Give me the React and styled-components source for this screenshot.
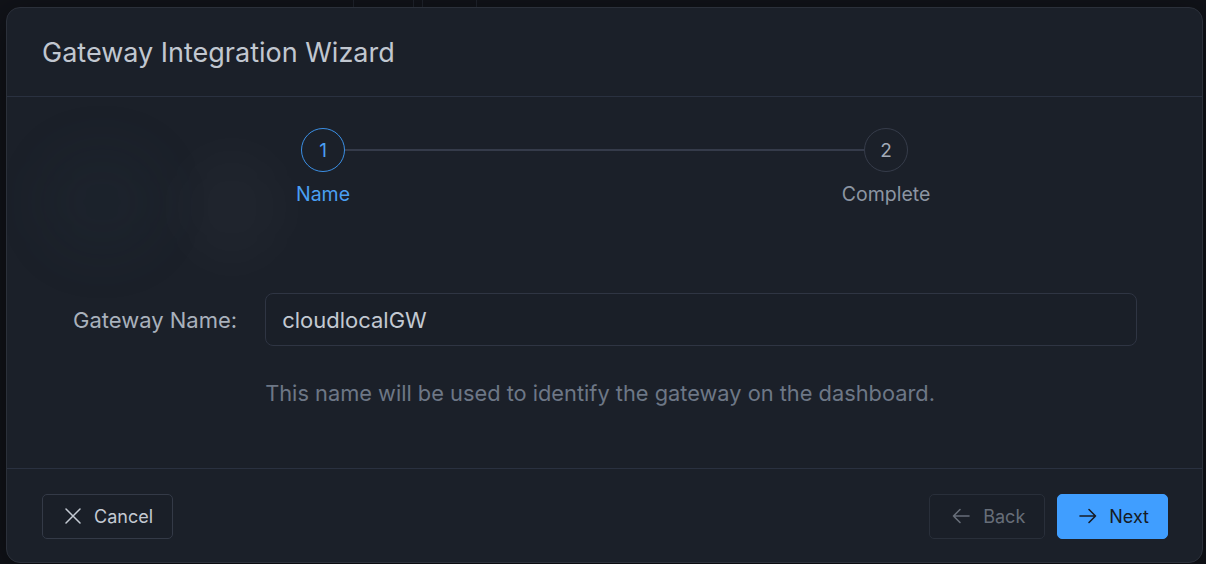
import React from "react";
import styled, { createGlobalStyle } from "styled-components";

const GlobalStyle = createGlobalStyle`
  html, body {
    margin: 0;
    padding: 0;
    background: #111319;
    font-family: Inter, "Noto Sans", "Liberation Sans", sans-serif;
  }
  * {
    box-sizing: border-box;
  }
`;

const Page = styled.div`
  width: 1206px;
  height: 564px;
  position: relative;
  overflow: hidden;
  background: #111319;
`;

const TopBar = styled.div`
  display: flex;
  height: 8px;
  padding-left: 353px;
`;

const TopCell = styled.div`
  width: ${(p) => p.w}px;
  border-left: 1px solid #1f232c;
  border-right: ${(p) => (p.last ? "1px solid #1f232c" : "none")};
`;

const Modal = styled.div`
  position: absolute;
  left: 6px;
  top: 7px;
  width: 1197px;
  height: 556px;
  display: flex;
  flex-direction: column;
  background: #1b2029;
  border: 1.5px solid #2b303a;
  border-radius: 14px;
  box-shadow: 0 10px 40px rgba(0, 0, 0, 0.5);
  overflow: hidden;
`;

const Header = styled.div`
  height: 89px;
  display: flex;
  align-items: center;
  padding: 0 35px;
  border-bottom: 1px solid #2a3140;
`;

const Title = styled.h2`
  margin: 0;
  font-size: 27px;
  font-weight: 400;
  color: #c1c7d0;
`;

const Body = styled.div`
  position: relative;
  flex: 1;
  padding: 31px 0 0;
  border-bottom: 1px solid #2a3140;
`;

const Glow = styled.div`
  position: absolute;
  left: ${(p) => p.x}px;
  top: ${(p) => p.y}px;
  width: ${(p) => p.w}px;
  height: ${(p) => p.h}px;
  border-radius: 45%;
  background: ${(p) => p.c};
  filter: blur(24px);
  pointer-events: none;
`;

const Stepper = styled.div`
  position: relative;
  width: 607px;
  margin: 0 auto;
  display: grid;
  grid-template-columns: 44px 1fr 44px;
  row-gap: 10px;
  align-items: center;
`;

const Circle = styled.div`
  width: 44px;
  height: 44px;
  border-radius: 50%;
  display: flex;
  align-items: center;
  justify-content: center;
  border: 1px solid ${(p) => (p.active ? "#3b8fe4" : "#363c4a")};
  color: ${(p) => (p.active ? "#4a9ff2" : "#a3abb7")};
  font-size: 19px;
`;

const Connector = styled.div`
  height: 2px;
  background: #353b4a;
`;

const StepLabel = styled.div`
  grid-column: ${(p) => p.col};
  justify-self: center;
  white-space: nowrap;
  font-size: 19.5px;
  line-height: 24px;
  color: ${(p) => (p.active ? "#4a9ff2" : "#8c95a2")};
`;

const Form = styled.div`
  position: relative;
  display: grid;
  grid-template-columns: auto 1fr;
  column-gap: 28px;
  row-gap: 33px;
  align-items: center;
  margin-top: 87px;
  padding: 0 65px 0 66px;
`;

const Label = styled.label`
  font-size: 22px;
  color: #a9b1bc;
`;

const Input = styled.input`
  height: 53px;
  width: 100%;
  padding: 0 16px;
  background: #1a1f28;
  border: 1px solid #2f3543;
  border-radius: 8px;
  color: #c3c9d2;
  font-family: inherit;
  font-size: 22px;
  outline: none;
`;

const Help = styled.p`
  grid-column: 2;
  margin: 0;
  font-size: 21.8px;
  line-height: 28px;
  color: #6d7786;
`;

const Footer = styled.div`
  height: 93px;
  display: flex;
  align-items: center;
  justify-content: space-between;
  padding: 1px 34px 0 35px;
`;

const Group = styled.div`
  display: flex;
  gap: 12px;
`;

const Button = styled.button`
  height: 45px;
  display: flex;
  align-items: center;
  gap: ${(p) => (p.primary ? 12 : 13)}px;
  padding: 0 ${(p) => (p.primary ? 18 : 19)}px 0 ${(p) => (p.primary ? 21 : 22)}px;
  border-radius: 5px;
  font-family: inherit;
  font-size: 18px;
  cursor: pointer;
  border: 1px solid ${(p) => (p.primary ? "#409eff" : p.disabled ? "#292f3a" : "#343a47")};
  background: ${(p) => (p.primary ? "#409eff" : "#1a1f28")};
  color: ${(p) => (p.primary ? "#161b24" : p.disabled ? "#676e79" : "#c4cad3")};
`;

const CloseIcon = () => (
  <svg width="16" height="16" viewBox="0 0 16 16" fill="none" stroke="currentColor" strokeWidth="1.5" strokeLinecap="round">
    <path d="M1 1 15 15M15 1 1 15" />
  </svg>
);

const ArrowIcon = ({ dir }) => (
  <svg width="18" height="16" viewBox="0 0 18 16" fill="none" stroke="currentColor" strokeWidth="1.6" strokeLinecap="round" strokeLinejoin="round">
    {dir === "left" ? (
      <path d="M17 8H1.5M8 1.5 1.5 8 8 14.5" />
    ) : (
      <path d="M1 8h15.5M10 1.5 16.5 8 10 14.5" />
    )}
  </svg>
);

export default function App() {
  const [name, setName] = React.useState("cloudlocalGW");

  return (
    <Page>
      <GlobalStyle />
      <TopBar>
        <TopCell w={60} />
        <TopCell w={9} />
        <TopCell w={55} last />
      </TopBar>
      <Modal>
        <Header>
          <Title>Gateway Integration Wizard</Title>
        </Header>
        <Body>
          <Glow x={35} y={50} w={120} h={110} c="rgba(40, 60, 80, 0.08)" />
          <Glow x={170} y={50} w={110} h={120} c="rgba(255, 255, 255, 0.02)" />
          <Stepper>
            <Circle active>1</Circle>
            <Connector />
            <Circle>2</Circle>
            <StepLabel col={1} active>
              Name
            </StepLabel>
            <StepLabel col={3}>Complete</StepLabel>
          </Stepper>
          <Form>
            <Label htmlFor="gw-name">Gateway Name:</Label>
            <Input id="gw-name" value={name} onChange={(e) => setName(e.target.value)} />
            <Help>This name will be used to identify the gateway on the dashboard.</Help>
          </Form>
        </Body>
        <Footer>
          <Button>
            <CloseIcon />
            Cancel
          </Button>
          <Group>
            <Button disabled>
              <ArrowIcon dir="left" />
              Back
            </Button>
            <Button primary>
              <ArrowIcon dir="right" />
              Next
            </Button>
          </Group>
        </Footer>
      </Modal>
    </Page>
  );
}
